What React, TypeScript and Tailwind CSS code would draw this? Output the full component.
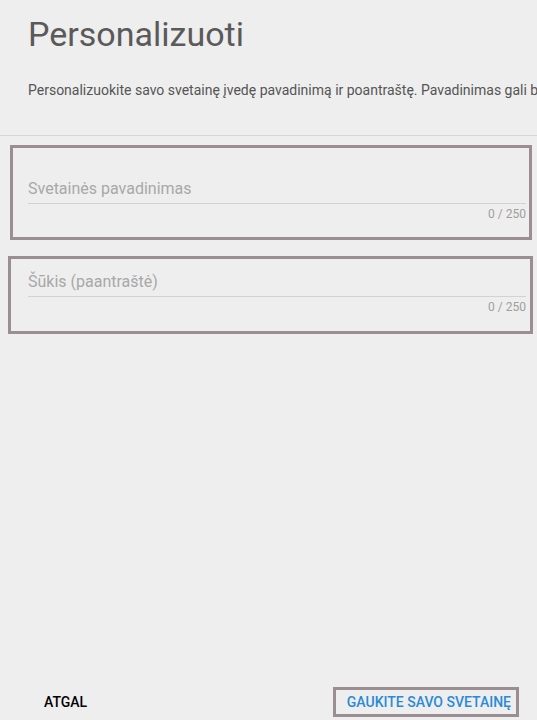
import React from 'react';

function Field({
	label,
	boxClass,
	padClass,
}: {
	label: string;
	boxClass: string;
	padClass: string;
}) {
	return (
		<div className={`border-[3px] border-[#9b8e92] ${boxClass}`}>
			<div className={padClass}>
				<div className="h-[20px] leading-[20px] text-[16px] text-[#a8a8a8]">{label}</div>
				<div className="mt-[4px] h-px bg-[#d2d2d2]" />
				<div className="mt-[3px] text-right text-[12px] leading-[14px] text-[#9e9e9e]">0 / 250</div>
			</div>
		</div>
	);
}

export default function App() {
	return (
		<div
			className="flex min-h-screen h-[720px] flex-col overflow-hidden bg-[#eeeeee]"
			style={{ fontFamily: 'Roboto, "Liberation Sans", sans-serif' }}
		>
			{/* HEADER */}
			<div className="pl-[28px] pt-[14px]">
				<h1 className="text-[34px] leading-[40px] text-[#5a5a5a]">Personalizuoti</h1>
				<p className="mt-[28px] whitespace-nowrap text-[14px] leading-[16px] text-[#555555]">
					Personalizuokite savo svetainę įvedę pavadinimą ir poantraštę. Pavadinimas gali būti rodomas jūsų svetainės viršuje.
				</p>
			</div>
			<div className="mt-[37px] h-px bg-[#d6d6d6]" />

			{/* FIELDS */}
			<Field
				label="Svetainės pavadinimas"
				boxClass="mt-[9px] ml-[10px] w-[522px]"
				padClass="pl-[15px] pr-[3px] pt-[31px] pb-[16px]"
			/>
			<Field
				label="Šūkis (paantraštė)"
				boxClass="mt-[16px] ml-[8px] w-[525px]"
				padClass="pl-[17px] pr-[4px] pt-[13px] pb-[17px]"
			/>

			{/* FOOTER */}
			<div className="mt-auto flex items-center justify-between pb-[3px] pl-[44px] pr-[18px]">
				<button className="text-[14px] font-medium leading-[16px] text-black">ATGAL</button>
				<div className="border-[3px] border-[#9b8e92]">
					<button className="h-[24px] pl-[11px] pr-[5px] text-[14px] font-medium leading-[24px] text-[#2b8ad6]">
						GAUKITE SAVO SVETAINĘ
					</button>
				</div>
			</div>
		</div>
	);
}
